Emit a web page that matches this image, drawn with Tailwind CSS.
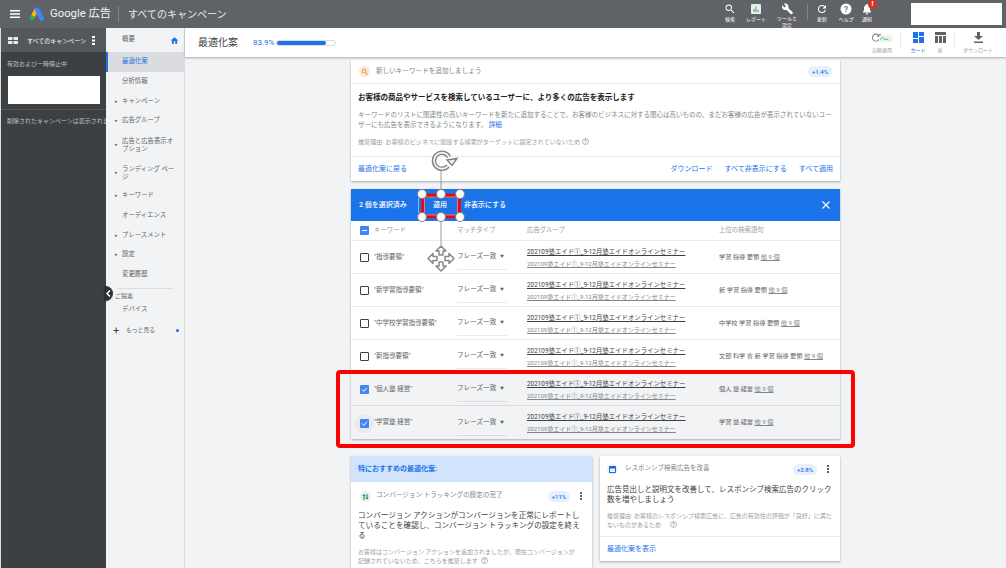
<!DOCTYPE html>
<html lang="ja">
<head>
    <meta charset="UTF-8">
    <title>最適化案 - Google 広告</title>
    <script src="https://cdn.jsdelivr.net/npm/@tailwindcss/browser@4"></script>
</head>
<body class="relative w-[1006px] h-[568px] overflow-hidden bg-[#f1f3f4] font-['Roboto','Noto_Sans_CJK_JP',sans-serif] text-[#5f6368]">

    <!-- top bar -->
    <header class="h-[28px] bg-[#5f6368] flex items-center text-white">
        <svg class="ml-[10px] w-[10px] h-[8px]" viewBox="0 0 10 8"><path d="M0 0h10v1.400H0zM0 3.300h10v1.400H0zM0 6.600h10V8H0z" fill="#fff"/></svg>
        <svg class="ml-[9px] w-[16px] h-[14px]" viewBox="0 0 16 14"><path d="M5.500 1.500 1.500 10l3 2.500L8.500 5z" fill="#fbbc04"/><path d="M8 .6a2.500 2.500 0 0 0-3 1.200l5.500 10.700a2.300 2.300 0 0 0 4.100-2.200L10.200 1.800A2.500 2.500 0 0 0 8 .6z" fill="#4285f4"/><circle cx="3.200" cy="10.900" r="2.400" fill="#34a853"/></svg>
        <span class="ml-[5px] w-[62px] text-[11.300px] leading-none text-[#f1f3f4] whitespace-nowrap">Google 広告</span>
        <span class="ml-[6px] w-px h-[16px] bg-[#80868b]"></span>
        <span class="ml-[9px] text-[10px] text-[#e8eaed]">すべてのキャンペーン</span>

        <div class="ml-auto flex items-start h-full pt-[3px]">
            <div class="w-[26px] flex flex-col items-center text-[5px] leading-[8px]">
                <svg class="w-[12px] h-[12px]" viewBox="0 0 24 24"><path d="M15.5 14h-.79l-.28-.27A6.471 6.471 0 0 0 16 9.500 6.500 6.500 0 1 0 9.500 16c1.610 0 3.090-.59 4.230-1.570l.27.28v.79l5 4.990L20.490 19l-4.990-5zm-6 0C7.010 14 5 11.990 5 9.500S7.010 5 9.500 5 14 7.010 14 9.500 11.990 14 9.500 14z" fill="#fff"/></svg>
                <span>検索</span>
            </div>
            <div class="w-[26px] flex flex-col items-center text-[5px] leading-[8px]">
                <svg class="w-[12px] h-[12px]" viewBox="0 0 12 12"><rect x="1" y="1" width="10" height="10" rx="1" fill="#e8eaed"/><path d="M3.500 6h1v3h-1zM5.500 3.500h1V9h-1zM7.500 7h1v2h-1z" fill="#34a853"/></svg>
                <span>レポート</span>
            </div>
            <div class="w-[36px] flex flex-col items-center text-[5px] leading-[7px] text-center">
                <svg class="w-[13px] h-[12px]" viewBox="0 0 24 24"><path d="M22.700 19 13.600 9.900c.9-2.300.4-5-1.500-6.900-2-2-5-2.400-7.400-1.300L9 6 6 9 1.600 4.700C.4 7.100.9 10.100 2.900 12.100c1.900 1.900 4.600 2.400 6.900 1.500l9.100 9.100c.4.400 1 .4 1.400 0l2.300-2.300c.5-.4.500-1.100.1-1.400z" fill="#fff"/></svg>
                <span>ツールと<br>設定</span>
            </div>
            <span class="mx-[2px] mt-[1px] w-px h-[16px] bg-[#80868b]"></span>
            <div class="w-[24px] flex flex-col items-center text-[5px] leading-[8px]">
                <svg class="w-[12px] h-[12px]" viewBox="0 0 24 24"><path d="M17.650 6.350A7.960 7.960 0 0 0 12 4a8 8 0 1 0 7.730 10h-2.080A6 6 0 1 1 12 6c1.660 0 3.140.69 4.220 1.780L13 11h7V4z" fill="#fff"/></svg>
                <span>更新</span>
            </div>
            <div class="w-[24px] flex flex-col items-center text-[5px] leading-[8px]">
                <svg class="w-[12px] h-[12px]" viewBox="0 0 24 24"><circle cx="12" cy="12" r="11" fill="#fff"/><path d="M8.500 9.500a3.500 3.500 0 1 1 5.500 2.800c-1 .7-1.300 1.200-1.300 2.200h-2c0-1.600.6-2.400 1.700-3.200.7-.5 1-1 1-1.700a1.700 1.700 0 0 0-3.400 0zM10.700 16h2v2h-2z" fill="#5f6368"/></svg>
                <span>ヘルプ</span>
            </div>
            <div class="relative w-[18px] flex flex-col items-center text-[5px] leading-[8px]">
                <svg class="w-[12px] h-[12px]" viewBox="0 0 24 24"><path d="M12 23a2.500 2.500 0 0 0 2.500-2.500h-5A2.500 2.500 0 0 0 12 23zm8-6-2-2v-5c0-3.200-1.900-5.800-4.500-6.600V2h-3v1.400C7.900 4.200 6 6.800 6 10v5l-2 2v2h16z" fill="#fff"/></svg>
                <span>通知</span>
                <span class="absolute top-[-3px] left-[10px] w-[9px] h-[9px] rounded-full bg-[#d93025] text-[7px] leading-[9px] text-center font-bold">!</span>
            </div>
            <div class="ml-[35px] mr-[4px] w-[91px] h-[22px] bg-white"></div>
        </div>
    </header>

    <div class="flex h-[540px]">
        <!-- campaign sidebar -->
        <aside class="w-[106px] shrink-0 bg-[#3c4043] border-l border-[#dadce0] text-[#bdc1c6] overflow-hidden">
            <div class="h-[24px] bg-[#54585d] flex items-center text-white">
                <svg class="ml-[7px] w-[10px] h-[7px]" viewBox="0 0 10 7"><path d="M0 0h4.500v3H0zM5.500 0H10v3H5.500zM0 4h4.500v3H0zM5.500 4H10v3H5.500z" fill="#e8eaed"/></svg>
                <span class="ml-[9px] text-[6px] whitespace-nowrap">すべてのキャンペーン</span>
                <svg class="ml-[6px] w-[3px] h-[9px]" viewBox="0 0 3 9"><path d="M0 0h3v2H0zM0 3.500h3v2H0zM0 7h3v2H0z" fill="#fff"/></svg>
            </div>
            <p class="mt-[7px] ml-[6px] text-[6px] leading-[10px]">有効および一時停止中</p>
            <div class="mt-[7px] ml-[7px] w-[92px] h-[28px] bg-white"></div>
            <div class="mt-[5px] h-px bg-[#54585d]"></div>
            <p class="mt-[6px] ml-[6px] w-[99px] overflow-hidden text-[6px] leading-[10px] whitespace-nowrap">削除されたキャンペーンは表示されません</p>
        </aside>

        <!-- page menu -->
        <nav class="w-[79px] shrink-0 bg-[#f1f3f4] border-r border-[#dadce0] text-[6.400px] text-[#5f6368]">
            <div class="h-[24px] flex items-center pl-[16px] pr-[5px] justify-between">
                <span>概要</span>
                <svg class="w-[9px] h-[9px]" viewBox="0 0 24 24"><path d="M10 21v-7h4v7h5v-9h3L12 3 2 12h3v9z" fill="#1a73e8"/></svg>
            </div>
            <div class="h-[20px] flex items-center pl-[14px] bg-[#dadce0] border-l-2 border-[#1a73e8] text-[#1a73e8]">最適化案</div>
            <div class="h-[20px] flex items-center pl-[16px]">分析情報</div>
            <div class="h-[19px] flex items-center pl-[9px]"><span class="w-[7px] text-[5px]">▸</span>キャンペーン</div>
            <div class="h-[20px] flex items-center pl-[9px]"><span class="w-[7px] text-[5px]">▸</span>広告グループ</div>
            <div class="h-[28px] flex items-center pl-[9px]"><span class="w-[7px] shrink-0 text-[5px]">▸</span><span class="leading-[8px] w-[54px]">広告と広告表示オプション</span></div>
            <div class="h-[27px] flex items-center pl-[9px]"><span class="w-[7px] shrink-0 text-[5px]">▸</span><span class="leading-[8px] w-[54px]">ランディング ページ</span></div>
            <div class="h-[20px] flex items-center pl-[9px]"><span class="w-[7px] text-[5px]">▸</span>キーワード</div>
            <div class="h-[20px] flex items-center pl-[16px]">オーディエンス</div>
            <div class="h-[19px] flex items-center pl-[9px]"><span class="w-[7px] text-[5px]">▸</span>プレースメント</div>
            <div class="h-[20px] flex items-center pl-[9px]"><span class="w-[7px] text-[5px]">▸</span>設定</div>
            <div class="h-[20px] flex items-center pl-[16px]">変更履歴</div>
            <div class="mt-[3px] ml-[11px] w-[56px] h-px bg-[#dadce0]"></div>
            <div class="mt-[2px] pl-[9px] text-[6px] leading-[10px]">ご提案</div>
            <div class="h-[18px] flex items-center pl-[16px]">デバイス</div>
            <div class="mt-[1px] h-[20px] flex items-center pl-[7px] pr-[5px]">
                <span class="w-[13px] text-[11px] leading-none text-[#3c4043]">+</span>
                <span class="text-[5.800px]">もっと見る</span>
                <span class="ml-auto w-[3px] h-[3px] rounded-full bg-[#1a73e8]"></span>
            </div>
        </nav>

        <!-- main -->
        <main class="flex-1 min-w-0 flex flex-col">
            <div class="h-[29px] shrink-0 bg-white shadow-[0_1px_2px_rgba(60,64,67,0.4)] flex items-center relative z-10">
                <h1 class="ml-[13px] text-[10px] text-[#3c4043]">最適化案</h1>
                <span class="ml-[15px] text-[8px] text-[#1a73e8]">83.9%</span>
                <div class="ml-[2px] w-[60px] h-[6px] rounded-full border border-[#dadce0] bg-white">
                    <div class="w-[49px] h-full rounded-full bg-[#1a73e8]"></div>
                </div>
                <div class="ml-auto flex items-start pr-[11px] text-[5px] leading-[8px] text-[#9aa0a6]">
                    <div class="relative w-[30px] flex flex-col items-center">
                        <svg class="w-[22px] h-[11px]" viewBox="0 0 22 11"><path d="M9 5.500a4 4 0 1 1-1.200-2.800L9.500 1v4h-4l1.500-1.500A3 3 0 1 0 8 5.500z" fill="#80868b"/><rect x="8" y="3.500" width="13" height="6.500" fill="#e6f4ea"/><path d="m9 7.500 2.500-2 2 2 2-.5 2 1" fill="none" stroke="#34a853" stroke-width=".8"/></svg>
                        <span class="mt-[3px] whitespace-nowrap">自動適用</span>
                    </div>
                    <span class="ml-[3px] mr-[6px] w-px h-[17px] bg-[#e8eaed]"></span>
                    <div class="w-[22px] flex flex-col items-center text-[#1a73e8]">
                        <svg class="w-[11px] h-[11px]" viewBox="0 0 11 11"><path d="M0 0h5v6H0zM6 0h5v4H6zM0 7h5v4H0zM6 5h5v6H6z" fill="#1a73e8"/></svg>
                        <span class="mt-[3px]">カード</span>
                    </div>
                    <div class="w-[22px] flex flex-col items-center">
                        <svg class="w-[11px] h-[11px]" viewBox="0 0 11 11"><path d="M0 0h11v3H0zM0 4h3v7H0zM4 4h3v7H4zM8 4h3v7H8z" fill="#5f6368"/></svg>
                        <span class="mt-[3px]">表</span>
                    </div>
                    <span class="ml-[3px] mr-[6px] w-px h-[17px] bg-[#e8eaed]"></span>
                    <div class="w-[34px] flex flex-col items-center">
                        <svg class="w-[9px] h-[11px]" viewBox="0 0 9 11"><path d="M3 0h3v4h3L4.500 8 0 4h3zM0 9.500h9V11H0z" fill="#5f6368"/></svg>
                        <span class="mt-[3px] whitespace-nowrap">ダウンロード</span>
                    </div>
                </div>
            </div>

            <div class="flex-1 min-h-0 overflow-hidden pt-[3px]">
                <div class="w-[489px] mx-auto">

                    <!-- keyword card -->
                    <section class="h-[121px] bg-white shadow-[0_1px_2px_rgba(60,64,67,0.4)] flex flex-col">
                        <div class="h-[24px] flex items-center px-[8px] border-b border-[#e8eaed]">
                            <span class="w-[11px] h-[11px] rounded-full bg-[#fce8d6] flex items-center justify-center">
                                <svg class="w-[8px] h-[8px]" viewBox="0 0 24 24"><path d="M15.5 14h-.79l-.28-.27A6.471 6.471 0 0 0 16 9.500 6.500 6.500 0 1 0 9.500 16c1.610 0 3.090-.59 4.230-1.570l.27.28v.79l5 4.990L20.490 19l-4.990-5zm-6 0C7.010 14 5 11.990 5 9.500S7.010 5 9.500 5 14 7.010 14 9.500 11.990 14 9.500 14z" fill="#e8710a"/></svg>
                            </span>
                            <span class="ml-[6px] text-[6.600px] text-[#80868b]">新しいキーワードを追加しましょう</span>
                            <span class="ml-auto w-[24px] h-[11px] rounded-full bg-[#e8f0fe] text-[#1a73e8] text-[6px] leading-[11px] text-center font-medium">+1.4%</span>
                        </div>
                        <div class="px-[7px] flex-1">
                            <h2 class="mt-[8px] text-[7.500px] leading-[12px] font-bold text-[#202124]">お客様の商品やサービスを検索しているユーザーに、より多くの広告を表示します</h2>
                            <p class="mt-[6px] text-[6.500px] leading-[10px] text-[#80868b]">キーワードのリストに関連性の高いキーワードを新たに追加することで、お客様のビジネスに対する関心は高いものの、まだお客様の広告が表示されていないユーザーにも広告を表示できるようになります。 <span class="text-[#1a73e8]">詳細</span></p>
                            <div class="mt-[7px] flex items-center gap-[2px] text-[6.100px] leading-[9px] text-[#9aa0a6]"><span>推奨理由: お客様のビジネスに関連する検索がターゲットに設定されていないため</span><svg class="w-[7px] h-[7px]" viewBox="0 0 7 7"><circle cx="3.500" cy="3.500" r="3" fill="none" stroke="#80868b" stroke-width=".6"/><path d="M2.500 2.800a1 1 0 1 1 1.500.9c-.4.2-.5.4-.5.800M3.500 5v.6" fill="none" stroke="#80868b" stroke-width=".6"/></svg></div>
                        </div>
                        <div class="h-[25px] border-t border-[#e8eaed] flex items-center px-[7px] text-[7px] text-[#1a73e8]">
                            <span>最適化案に戻る</span>
                            <span class="ml-auto">ダウンロード</span>
                            <span class="ml-[12px]">すべて非表示にする</span>
                            <span class="ml-[12px]">すべて適用</span>
                        </div>
                    </section>

                    <!-- keyword table -->
                    <section class="mt-[8px] bg-white shadow-[0_1px_2px_rgba(60,64,67,0.4)]">
                        <div class="h-[32px] bg-[#1a73e8] flex items-center text-white text-[7px] font-medium">
                            <span class="ml-[8px] w-[59px]">2 個を選択済み</span>
                            <span class="w-px h-[16px] bg-[#8ab4f8]"></span>
                            <span class="ml-[14px] w-[31px]">適用</span>
                            <span>非表示にする</span>
                            <svg class="ml-auto mr-[10px] w-[8px] h-[8px]" viewBox="0 0 8 8"><path d="m.5.5 7 7m0-7-7 7" stroke="#fff" stroke-width="1.100"/></svg>
                        </div>
                        <div class="h-[20px] flex items-center text-[6.400px] text-[#9aa0a6] border-b border-[#e8eaed]">
                            <span class="ml-[9px] w-[9px] h-[9px] rounded-[1px] bg-[#4285f4] flex items-center justify-center"><span class="w-[5px] h-px bg-white"></span></span>
                            <span class="ml-[5px] w-[83px]">キーワード</span>
                            <span class="w-[70px]">マッチタイプ</span>
                            <span class="w-[192px]">広告グループ</span>
                            <span>上位の検索語句</span>
                        </div>

                        <div class="h-[33px] pt-[1px] flex items-center border-b border-[#e8eaed]">
                            <span class="ml-[9px] w-[9px] h-[9px] rounded-[1px] border border-[#3c4043]"></span>
                            <span class="ml-[5px] w-[83px] text-[6.500px] whitespace-nowrap">"指導要領"</span>
                            <div class="w-[50px] h-[25px] border-b border-[#e8eaed] flex items-center justify-between pr-[3px] text-[6.600px]">フレーズ一致<span class="text-[4px]">▼</span></div>
                            <div class="ml-[20px] w-[192px] leading-[11px]">
                                <div class="text-[6.400px] text-[#3c4043] underline whitespace-nowrap">202109塾エイド①_9-12月塾エイドオンラインセミナー</div>
                                <div class="text-[6px] text-[#80868b] underline whitespace-nowrap">202109塾エイド①_9-12月塾エイドオンラインセミナー</div>
                            </div>
                            <span class="text-[6.200px] whitespace-nowrap">学習 指導 要領 <span class="underline text-[#80868b]">他 9 個</span></span>
                        </div>
                        <div class="h-[33px] pt-[1px] flex items-center border-b border-[#e8eaed]">
                            <span class="ml-[9px] w-[9px] h-[9px] rounded-[1px] border border-[#3c4043]"></span>
                            <span class="ml-[5px] w-[83px] text-[6.500px] whitespace-nowrap">"新学習指導要領"</span>
                            <div class="w-[50px] h-[25px] border-b border-[#e8eaed] flex items-center justify-between pr-[3px] text-[6.600px]">フレーズ一致<span class="text-[4px]">▼</span></div>
                            <div class="ml-[20px] w-[192px] leading-[11px]">
                                <div class="text-[6.400px] text-[#3c4043] underline whitespace-nowrap">202109塾エイド①_9-12月塾エイドオンラインセミナー</div>
                                <div class="text-[6px] text-[#80868b] underline whitespace-nowrap">202109塾エイド①_9-12月塾エイドオンラインセミナー</div>
                            </div>
                            <span class="text-[6.200px] whitespace-nowrap">新 学習 指導 要領 <span class="underline text-[#80868b]">他 9 個</span></span>
                        </div>
                        <div class="h-[33px] pt-[1px] flex items-center border-b border-[#e8eaed]">
                            <span class="ml-[9px] w-[9px] h-[9px] rounded-[1px] border border-[#3c4043]"></span>
                            <span class="ml-[5px] w-[83px] text-[6.500px] whitespace-nowrap">"中学校学習指導要領"</span>
                            <div class="w-[50px] h-[25px] border-b border-[#e8eaed] flex items-center justify-between pr-[3px] text-[6.600px]">フレーズ一致<span class="text-[4px]">▼</span></div>
                            <div class="ml-[20px] w-[192px] leading-[11px]">
                                <div class="text-[6.400px] text-[#3c4043] underline whitespace-nowrap">202109塾エイド①_9-12月塾エイドオンラインセミナー</div>
                                <div class="text-[6px] text-[#80868b] underline whitespace-nowrap">202109塾エイド①_9-12月塾エイドオンラインセミナー</div>
                            </div>
                            <span class="text-[6.200px] whitespace-nowrap">中学校 学習 指導 要領 <span class="underline text-[#80868b]">他 9 個</span></span>
                        </div>
                        <div class="h-[33px] pt-[1px] flex items-center border-b border-[#e8eaed]">
                            <span class="ml-[9px] w-[9px] h-[9px] rounded-[1px] border border-[#3c4043]"></span>
                            <span class="ml-[5px] w-[83px] text-[6.500px] whitespace-nowrap">"新指導要領"</span>
                            <div class="w-[50px] h-[25px] border-b border-[#e8eaed] flex items-center justify-between pr-[3px] text-[6.600px]">フレーズ一致<span class="text-[4px]">▼</span></div>
                            <div class="ml-[20px] w-[192px] leading-[11px]">
                                <div class="text-[6.400px] text-[#3c4043] underline whitespace-nowrap">202109塾エイド①_9-12月塾エイドオンラインセミナー</div>
                                <div class="text-[6px] text-[#80868b] underline whitespace-nowrap">202109塾エイド①_9-12月塾エイドオンラインセミナー</div>
                            </div>
                            <span class="text-[6.200px] whitespace-nowrap">文部 科学 省 新 学習 指導 要領 <span class="underline text-[#80868b]">他 9 個</span></span>
                        </div>
                        <div class="h-[33px] pt-[1px] flex items-center border-b border-[#dadce0] bg-[#f1f3f4]">
                            <span class="ml-[9px] w-[9px] h-[9px] rounded-[1px] bg-[#4285f4] flex items-center justify-center"><svg class="w-[7px] h-[7px]" viewBox="0 0 7 7"><path d="m1 3.500 1.800 1.800L6 1.800" fill="none" stroke="#fff"/></svg></span>
                            <span class="ml-[5px] w-[83px] text-[6.500px] whitespace-nowrap">"個人塾 経営"</span>
                            <div class="w-[50px] h-[25px] border-b border-[#dadce0] flex items-center justify-between pr-[3px] text-[6.600px]">フレーズ一致<span class="text-[4px]">▼</span></div>
                            <div class="ml-[20px] w-[192px] leading-[11px]">
                                <div class="text-[6.400px] text-[#3c4043] underline whitespace-nowrap">202109塾エイド①_9-12月塾エイドオンラインセミナー</div>
                                <div class="text-[6px] text-[#80868b] underline whitespace-nowrap">202109塾エイド①_9-12月塾エイドオンラインセミナー</div>
                            </div>
                            <span class="text-[6.200px] whitespace-nowrap">個人 塾 経営 <span class="underline text-[#80868b]">他 9 個</span></span>
                        </div>
                        <div class="h-[33px] pt-[1px] flex items-center bg-[#f1f3f4]">
                            <span class="ml-[4px] w-[19px] h-[19px] rounded-full bg-[#e8eaed] flex items-center justify-center"><span class="w-[9px] h-[9px] rounded-[1px] bg-[#4285f4] flex items-center justify-center"><svg class="w-[7px] h-[7px]" viewBox="0 0 7 7"><path d="m1 3.500 1.800 1.800L6 1.800" fill="none" stroke="#fff"/></svg></span></span>
                            <span class="w-[83px] text-[6.500px] whitespace-nowrap">"学習塾 経営"</span>
                            <div class="w-[50px] h-[25px] border-b border-[#dadce0] flex items-center justify-between pr-[3px] text-[6.600px]">フレーズ一致<span class="text-[4px]">▼</span></div>
                            <div class="ml-[20px] w-[192px] leading-[11px]">
                                <div class="text-[6.400px] text-[#3c4043] underline whitespace-nowrap">202109塾エイド①_9-12月塾エイドオンラインセミナー</div>
                                <div class="text-[6px] text-[#80868b] underline whitespace-nowrap">202109塾エイド①_9-12月塾エイドオンラインセミナー</div>
                            </div>
                            <span class="text-[6.200px] whitespace-nowrap">学習 塾 経営 <span class="underline text-[#80868b]">他 9 個</span></span>
                        </div>
                    </section>

                    <!-- lower cards -->
                    <div class="mt-[17px] flex items-start gap-[8px]">
                        <section class="w-[241px] h-[140px] shrink-0 bg-white shadow-[0_1px_2px_rgba(60,64,67,0.4)]">
                            <div class="h-[26px] bg-[#d2e3fc] flex items-center pl-[7px] text-[7px] font-bold text-[#1a73e8]">特におすすめの最適化案:</div>
                            <div class="h-[28px] flex items-center px-[9px]">
                                <span class="w-[11px] h-[11px] rounded-full bg-[#e6f4ea] flex items-center justify-center">
                                    <svg class="w-[7px] h-[7px]" viewBox="0 0 7 7"><path d="M2 7V2M.8 3 2 1.500 3.200 3M5 1v5M3.800 4.500 5 6l1.200-1.500" fill="none" stroke="#188038"/></svg>
                                </span>
                                <span class="ml-[5px] text-[6.600px] text-[#80868b] whitespace-nowrap">コンバージョン トラッキングの設定の完了</span>
                                <span class="ml-auto w-[22px] h-[11px] rounded-full bg-[#e8f0fe] text-[#1a73e8] text-[6px] leading-[11px] text-center font-medium">+11%</span>
                                <svg class="ml-[10px] mr-[1px] w-[2px] h-[8px]" viewBox="0 0 2 8"><path d="M0 0h2v2H0zM0 3h2v2H0zM0 6h2v2H0z" fill="#5f6368"/></svg>
                            </div>
                            <h3 class="mt-[1px] ml-[7px] w-[222px] text-[7.600px] leading-[10px] text-[#3c4043]">コンバージョン アクションがコンバージョンを正常にレポートしていることを確認し、コンバージョン トラッキングの設定を終える</h3>
                            <p class="mt-[6px] ml-[7px] w-[222px] text-[6px] leading-[9px] text-[#9aa0a6]">お客様はコンバージョン アクションを追加されましたが、現在コンバージョンが記録されていないため、こちらを推奨します</p>
                        </section>
                        <section class="flex-1 h-[105px] bg-white shadow-[0_1px_2px_rgba(60,64,67,0.4)] flex flex-col">
                            <div class="h-[26px] flex items-center pl-[7px] pr-[11px]">
                                <span class="w-[11px] h-[11px] rounded-full bg-[#e8f0fe] flex items-center justify-center">
                                    <svg class="w-[7px] h-[7px]" viewBox="0 0 7 7"><path d="M.5.500h6v6h-6z" fill="none" stroke="#1967d2"/><path d="M.5.500h6v2h-6z" fill="#1967d2"/></svg>
                                </span>
                                <span class="ml-[7px] text-[6.500px] text-[#80868b]">レスポンシブ検索広告を改善</span>
                                <span class="ml-auto w-[24px] h-[11px] rounded-full bg-[#e8f0fe] text-[#1a73e8] text-[6px] leading-[11px] text-center font-medium">+3.8%</span>
                                <svg class="ml-[10px] w-[2px] h-[8px]" viewBox="0 0 2 8"><path d="M0 0h2v2H0zM0 3h2v2H0zM0 6h2v2H0z" fill="#5f6368"/></svg>
                            </div>
                            <h3 class="mt-[3px] px-[7px] text-[7.500px] leading-[10px] text-[#3c4043]">広告見出しと説明文を改善して、レスポンシブ検索広告のクリック数を増やしましょう</h3>
                            <p class="mt-[6px] px-[7px] text-[6px] leading-[9px] text-[#9aa0a6]">推奨理由: お客様のレスポンシブ検索広告に、広告の有効性の評価が「良好」に満たないものがあるため</p>
                            <div class="mt-auto h-[25px] border-t border-[#e8eaed] flex items-center px-[7px] text-[7px] text-[#1a73e8]">最適化案を表示</div>
                        </section>
                    </div>
                </div>
            </div>
        </main>
    </div>

    <!-- sidebar collapse handle -->
    <div class="absolute left-[104px] top-[286px] w-[9px] h-[15px] rounded-r-full bg-[#2d3033] shadow flex items-center justify-center">
        <svg class="w-[5px] h-[7px]" viewBox="0 0 5 7"><path d="M4 .5 1 3.500 4 6.500" fill="none" stroke="#fff" stroke-width="1.500"/></svg>
    </div>

    <!-- help marks after the two wrapped reasons -->
    <svg class="absolute left-[481px] top-[557px] w-[7px] h-[7px]" viewBox="0 0 7 7"><circle cx="3.500" cy="3.500" r="3" fill="none" stroke="#80868b" stroke-width=".6"/><path d="M2.500 2.800a1 1 0 1 1 1.500.9c-.4.2-.5.4-.5.800M3.500 5v.6" fill="none" stroke="#80868b" stroke-width=".6"/></svg>
    <svg class="absolute left-[670px] top-[521px] w-[7px] h-[7px]" viewBox="0 0 7 7"><circle cx="3.500" cy="3.500" r="3" fill="none" stroke="#80868b" stroke-width=".6"/><path d="M2.500 2.800a1 1 0 1 1 1.500.9c-.4.2-.5.4-.5.800M3.500 5v.6" fill="none" stroke="#80868b" stroke-width=".6"/></svg>

    <!-- red box around the two selected rows -->
    <div class="absolute left-[336px] top-[370px] w-[519px] h-[78px] border-[4px] border-[#ff0000] rounded-[4px]"></div>

    <!-- shape being edited over the apply button -->
    <svg class="absolute left-[410px] top-[148px] w-[64px] h-[124px]" viewBox="0 0 64 124">
        <path d="M31 22v24M31 69v28" stroke="#808080" stroke-width=".8"/>
        <rect x="13" y="47.500" width="36" height="21" fill="none" stroke="#ff0000" stroke-width="3.500"/>
        <rect x="14.500" y="49" width="33" height="18" fill="none" stroke="#fff" stroke-width=".7" opacity=".6"/>
        <path d="M38 18a8 8 0 1 1 1-9" fill="none" stroke="#808080" stroke-width="4.500"/>
        <path d="M38 18a8 8 0 1 1 1-9" fill="none" stroke="#f1f3f4" stroke-width="1.800"/>
        <path d="m37 12 10-1.500-5 7z" fill="#f1f3f4" stroke="#808080" stroke-width="1.400"/>
        <g fill="#fff" stroke="#808080" stroke-width="1.200">
            <circle cx="12" cy="46" r="4.500"/><circle cx="31" cy="46" r="4.500"/><circle cx="50" cy="46" r="4.500"/>
            <circle cx="12" cy="69" r="4.500"/><circle cx="31" cy="69" r="4.500"/><circle cx="50" cy="69" r="4.500"/>
        </g>
        <g fill="#fff" stroke="#888" stroke-width="1.500" stroke-linejoin="round">
            <path d="m31 98 5 5h-3v4h-4v-4h-3z"/>
            <path d="m31 123 5-5h-3v-4h-4v4h-3z"/>
            <path d="m18 110.500 5-5v3h4v4h-4v3z"/>
            <path d="m44 110.500-5-5v3h-4v4h4v3z"/>
        </g>
    </svg>
</body>
</html>
